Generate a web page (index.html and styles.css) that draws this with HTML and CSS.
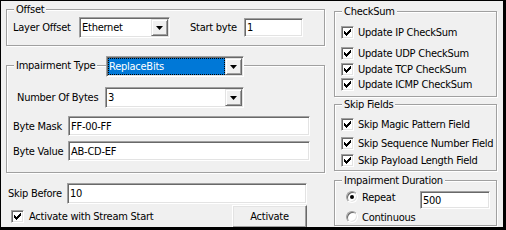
FILE: index.html
```html
<!DOCTYPE html>
<html lang="en">
<head>
    <meta charset="UTF-8">
    <title>Impairment Settings</title>
    <link rel="stylesheet" href="styles.css">
</head>
<body>
    <div class="panel">
        <div class="col-left">
            <fieldset class="group group-offset">
                <legend>Offset</legend>
                <div class="row">
                    <span class="lbl lbl-layer">Layer Offset</span>
                    <div class="combo combo-layer">
                        <span class="combo-text">Ethernet</span>
                        <span class="combo-btn"><svg width="7" height="4" viewBox="0 0 7 4"><path d="M0 0h7L3.5 4z"/></svg></span>
                    </div>
                    <span class="lbl lbl-start">Start byte</span>
                    <div class="textbox tb-start">1</div>
                </div>
            </fieldset>

            <fieldset class="group group-impair">
                <legend class="legend-impair">Impairment Type
                    <div class="combo combo-type">
                        <span class="combo-text selected">ReplaceBits</span>
                        <span class="combo-btn"><svg width="7" height="4" viewBox="0 0 7 4"><path d="M0 0h7L3.5 4z"/></svg></span>
                    </div>
                </legend>
                <div class="row">
                    <span class="lbl lbl-bytes">Number Of Bytes</span>
                    <div class="combo combo-bytes">
                        <span class="combo-text">3</span>
                        <span class="combo-btn"><svg width="7" height="4" viewBox="0 0 7 4"><path d="M0 0h7L3.5 4z"/></svg></span>
                    </div>
                </div>
                <div class="row row-mask">
                    <span class="lbl lbl-mask">Byte Mask</span>
                    <div class="textbox tb-wide">FF-00-FF</div>
                </div>
                <div class="row row-value">
                    <span class="lbl lbl-mask">Byte Value</span>
                    <div class="textbox tb-wide">AB-CD-EF</div>
                </div>
            </fieldset>

            <div class="row row-skip">
                <span class="lbl lbl-skip">Skip Before</span>
                <div class="textbox tb-skip">10</div>
            </div>

            <div class="row row-activate">
                <span class="check"><svg width="9" height="9" viewBox="0 0 9 9" shape-rendering="crispEdges"><path d="M7 1h1v1h-1zM6 2h2v1h-2zM1 3h1v1h-1zM5 3h3v1h-3zM1 4h2v1h-2zM4 4h3v1h-3zM1 5h5v1h-5zM2 6h3v1h-3zM3 7h1v1h-1z"/></svg></span>
                <span class="check-label stream-label">Activate with Stream Start</span>
                <button class="btn" type="button">Activate</button>
            </div>
        </div>

        <div class="col-right">
            <fieldset class="group group-check">
                <legend>CheckSum</legend>
                <div class="check-row cs1">
                    <span class="check"><svg width="9" height="9" viewBox="0 0 9 9" shape-rendering="crispEdges"><path d="M7 1h1v1h-1zM6 2h2v1h-2zM1 3h1v1h-1zM5 3h3v1h-3zM1 4h2v1h-2zM4 4h3v1h-3zM1 5h5v1h-5zM2 6h3v1h-3zM3 7h1v1h-1z"/></svg></span>
                    <span class="check-label">Update IP CheckSum</span>
                </div>
                <div class="check-row cs2">
                    <span class="check"><svg width="9" height="9" viewBox="0 0 9 9" shape-rendering="crispEdges"><path d="M7 1h1v1h-1zM6 2h2v1h-2zM1 3h1v1h-1zM5 3h3v1h-3zM1 4h2v1h-2zM4 4h3v1h-3zM1 5h5v1h-5zM2 6h3v1h-3zM3 7h1v1h-1z"/></svg></span>
                    <span class="check-label">Update UDP CheckSum</span>
                </div>
                <div class="check-row cs3">
                    <span class="check"><svg width="9" height="9" viewBox="0 0 9 9" shape-rendering="crispEdges"><path d="M7 1h1v1h-1zM6 2h2v1h-2zM1 3h1v1h-1zM5 3h3v1h-3zM1 4h2v1h-2zM4 4h3v1h-3zM1 5h5v1h-5zM2 6h3v1h-3zM3 7h1v1h-1z"/></svg></span>
                    <span class="check-label">Update TCP CheckSum</span>
                </div>
                <div class="check-row cs4">
                    <span class="check"><svg width="9" height="9" viewBox="0 0 9 9" shape-rendering="crispEdges"><path d="M7 1h1v1h-1zM6 2h2v1h-2zM1 3h1v1h-1zM5 3h3v1h-3zM1 4h2v1h-2zM4 4h3v1h-3zM1 5h5v1h-5zM2 6h3v1h-3zM3 7h1v1h-1z"/></svg></span>
                    <span class="check-label">Update ICMP CheckSum</span>
                </div>
            </fieldset>

            <fieldset class="group group-skip">
                <legend>Skip Fields</legend>
                <div class="check-row sk1">
                    <span class="check"><svg width="9" height="9" viewBox="0 0 9 9" shape-rendering="crispEdges"><path d="M7 1h1v1h-1zM6 2h2v1h-2zM1 3h1v1h-1zM5 3h3v1h-3zM1 4h2v1h-2zM4 4h3v1h-3zM1 5h5v1h-5zM2 6h3v1h-3zM3 7h1v1h-1z"/></svg></span>
                    <span class="check-label">Skip Magic Pattern Field</span>
                </div>
                <div class="check-row sk2">
                    <span class="check"><svg width="9" height="9" viewBox="0 0 9 9" shape-rendering="crispEdges"><path d="M7 1h1v1h-1zM6 2h2v1h-2zM1 3h1v1h-1zM5 3h3v1h-3zM1 4h2v1h-2zM4 4h3v1h-3zM1 5h5v1h-5zM2 6h3v1h-3zM3 7h1v1h-1z"/></svg></span>
                    <span class="check-label">Skip Sequence Number Field</span>
                </div>
                <div class="check-row sk3">
                    <span class="check"><svg width="9" height="9" viewBox="0 0 9 9" shape-rendering="crispEdges"><path d="M7 1h1v1h-1zM6 2h2v1h-2zM1 3h1v1h-1zM5 3h3v1h-3zM1 4h2v1h-2zM4 4h3v1h-3zM1 5h5v1h-5zM2 6h3v1h-3zM3 7h1v1h-1z"/></svg></span>
                    <span class="check-label">Skip Payload Length Field</span>
                </div>
            </fieldset>

            <fieldset class="group group-duration">
                <legend>Impairment Duration</legend>
                <div class="radio-row">
                    <span class="radio on"></span>
                    <span class="radio-label">Repeat</span>
                    <div class="textbox tb-repeat">500</div>
                </div>
                <div class="radio-row row-cont">
                    <span class="radio"></span>
                    <span class="radio-label">Continuous</span>
                </div>
            </fieldset>
        </div>
    </div>
</body>
</html>
```

FILE: styles.css
```css
body {
    margin: 0;
    font-family: "DejaVu Sans Condensed", "Liberation Sans", sans-serif;
    font-size: 11px;
    letter-spacing: -0.25px;
    color: #000;
    background: #fff;
}

.panel {
    width: 506px;
    height: 230px;
    box-sizing: border-box;
    border-style: solid;
    border-color: #000;
    border-width: 1px 3px 3px 1px;
    background: #f0f0f0;
    display: flex;
    overflow: hidden;
}

.col-left {
    width: 319px;
    margin-left: 5px;
    padding-top: 2px;
    flex: none;
}

.col-right {
    width: 163px;
    margin-left: 9px;
    padding-top: 4px;
    flex: none;
}

/* group boxes */
.group {
    margin: 0;
    padding: 0 6px;
    min-width: 0;
    border: 1px solid #a0a0a0;
    box-shadow: inset 1px 1px #fff, 1px 1px #fff;
}

.group legend {
    padding: 0 2px;
    margin-left: 1px;
    line-height: 13px;
    background: #f0f0f0;
}

.group-offset {
    padding-top: 1px;
    padding-bottom: 7px;
}

.group-impair {
    margin-top: 13px;
    padding-top: 15px;
    padding-bottom: 11px;
}

.legend-impair {
    position: relative;
}

.group-check {
    padding-top: 8px;
    padding-bottom: 5px;
}

.group-skip {
    margin-top: 1px;
    padding-top: 7px;
    padding-bottom: 3px;
}

.group-duration {
    margin-top: 3px;
    padding-top: 4px;
    padding-bottom: 1px;
}

/* rows and labels */
.row {
    display: flex;
    align-items: center;
}

.lbl {
    line-height: 13px;
    white-space: nowrap;
    flex: none;
}

.lbl-layer { width: 66px; }
.lbl-start { width: 54px; margin-left: 20px; }
.lbl-bytes { width: 88px; margin-left: 4px; }
.lbl-mask { width: 55px; }
.lbl-skip { width: 59px; }

.row-mask { margin-top: 8px; }
.row-value { margin-top: 5px; }

.row-skip {
    margin-top: 10px;
    padding-left: 2px;
}

.row-activate {
    margin-top: 1px;
    padding-left: 5px;
}

/* combo boxes */
.combo {
    display: flex;
    flex: none;
    box-sizing: border-box;
    height: 21px;
    padding: 1px;
    border: 1px solid;
    border-color: #a0a0a0 #fff #fff #a0a0a0;
    box-shadow: inset 1px 1px #696969, inset -1px -1px #e3e3e3;
    background: #fff;
}

.combo-layer { width: 91px; }
.combo-bytes { width: 139px; }

.combo-type {
    position: absolute;
    left: 92px;
    top: -3px;
    width: 138px;
}

.combo-text {
    flex: 1;
    line-height: 17px;
    padding-left: 1px;
    white-space: nowrap;
    overflow: hidden;
}

.combo-text.selected {
    box-sizing: border-box;
    line-height: 15px;
    border: 1px dotted #000;
    background: #0078d7;
    color: #fff;
    padding-left: 0;
}

.combo-btn {
    width: 17px;
    flex: none;
    box-sizing: border-box;
    display: flex;
    align-items: center;
    justify-content: center;
    border: 1px solid;
    border-color: #e3e3e3 #696969 #696969 #e3e3e3;
    box-shadow: inset 1px 1px #fff, inset -1px -1px #a0a0a0;
    background: #f0f0f0;
}

.combo-btn svg {
    display: block;
    fill: #000;
}

/* text boxes */
.textbox {
    flex: none;
    box-sizing: border-box;
    height: 20px;
    padding: 1px 0 0 2px;
    line-height: 17px;
    border: 1px solid;
    border-color: #a0a0a0 #fff #fff #a0a0a0;
    box-shadow: inset 1px 1px #696969, inset -1px -1px #e3e3e3;
    background: #fff;
    white-space: nowrap;
}

.tb-start { width: 59px; height: 19px; line-height: 16px; }
.tb-wide { width: 242px; }
.tb-skip { width: 240px; height: 21px; line-height: 18px; }
.tb-repeat { width: 70px; height: 18px; line-height: 15px; }

/* check boxes */
.check-row {
    display: flex;
    align-items: center;
    height: 13px;
}

.cs2 { margin-top: 8px; }
.cs3 { margin-top: 3px; }
.cs4 { margin-top: 2px; }
.sk2 { margin-top: 6px; }
.sk3 { margin-top: 4px; }

.check {
    flex: none;
    box-sizing: border-box;
    width: 13px;
    height: 13px;
    display: flex;
    align-items: center;
    justify-content: center;
    border: 1px solid;
    border-color: #a0a0a0 #fff #fff #a0a0a0;
    box-shadow: inset 1px 1px #696969, inset -1px -1px #e3e3e3;
    background: #fff;
}

.check svg {
    display: block;
    fill: #000;
}

.check-label {
    margin-left: 4px;
    line-height: 13px;
    white-space: nowrap;
}

.stream-label {
    margin-left: 5px;
}

/* radio buttons */
.radio-row {
    display: flex;
    align-items: flex-start;
}

.row-cont { margin-top: 2px; }

.radio {
    flex: none;
    position: relative;
    box-sizing: border-box;
    width: 12px;
    height: 12px;
    margin-left: 5px;
    border-radius: 50%;
    border: 1px solid;
    border-color: #a0a0a0 #fff #fff #a0a0a0;
    box-shadow: inset 1px 1px #696969, inset -1px -1px #e3e3e3;
    background: #fff;
}

.radio.on::after {
    content: "";
    position: absolute;
    left: 3px;
    top: 3px;
    width: 4px;
    height: 4px;
    border-radius: 50%;
    background: #000;
}

.radio-label {
    width: 58px;
    margin-left: 4px;
    line-height: 13px;
}

/* push button */
.btn {
    width: 75px;
    height: 23px;
    margin-left: auto;
    margin-right: 18px;
    padding: 0;
    box-sizing: border-box;
    font: inherit;
    letter-spacing: inherit;
    color: #000;
    border: 1px solid;
    border-color: #fff #696969 #696969 #fff;
    box-shadow: inset -1px -1px #a0a0a0, inset 1px 1px #e3e3e3;
    background: #f0f0f0;
}
```
